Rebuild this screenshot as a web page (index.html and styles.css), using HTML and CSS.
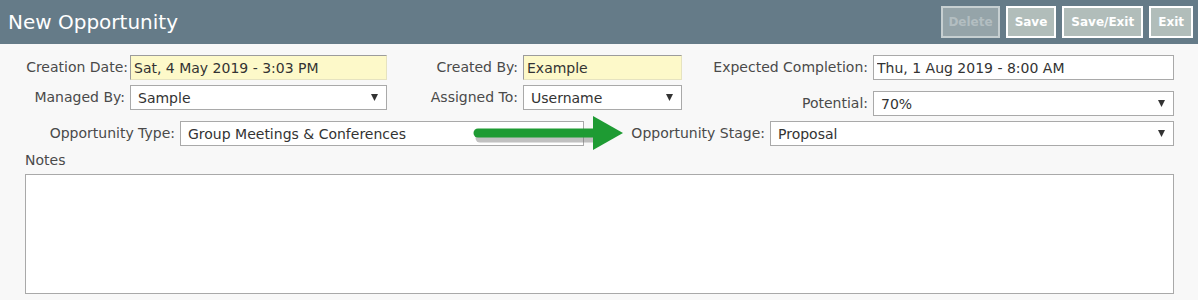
FILE: index.html
```html
<!DOCTYPE html>
<html lang="en">
<head>
    <meta charset="UTF-8">
    <title>New Opportunity</title>
    <link rel="stylesheet" href="styles.css">
</head>
<body>
    <div class="header">
        <h1>New Opportunity</h1>
        <div class="actions">
            <button class="btn" disabled>Delete</button>
            <button class="btn">Save</button>
            <button class="btn">Save/Exit</button>
            <button class="btn">Exit</button>
        </div>
    </div>
    <form class="form">
        <div class="row row-three">
            <label>Creation Date:</label>
            <input type="text" class="readonly" value="Sat, 4 May 2019 - 3:03 PM" readonly>
            <label>Created By:</label>
            <input type="text" class="readonly" value="Example" readonly>
            <label>Expected Completion:</label>
            <input type="text" value="Thu, 1 Aug 2019 - 8:00 AM">
        </div>
        <div class="row row-three">
            <label>Managed By:</label>
            <select><option>Sample</option></select>
            <label>Assigned To:</label>
            <select><option>Username</option></select>
            <label class="lower">Potential:</label>
            <select class="lower"><option>70%</option></select>
        </div>
        <div class="row row-two">
            <label>Opportunity Type:</label>
            <select><option>Group Meetings &amp; Conferences</option></select>
            <label>Opportunity Stage:</label>
            <select><option>Proposal</option></select>
        </div>
        <div class="notes">
            <label>Notes</label>
            <textarea></textarea>
        </div>
        <svg class="arrow" width="170" height="50" viewBox="0 0 170 50">
            <g transform="translate(1 4)" stroke="#777" opacity="0.45">
                <line x1="13" y1="22" x2="128" y2="22" stroke-width="9" stroke-linecap="round"/>
            </g>
            <g fill="#1e9b33" stroke="#1e9b33">
                <line x1="12" y1="21" x2="128" y2="21" stroke-width="9" stroke-linecap="round"/>
                <polygon points="127,4 157,21 127,38" stroke="none"/>
            </g>
        </svg>
    </form>
</body>
</html>
```

FILE: styles.css
```css
body {
    margin: 0;
    background: #f8f8f8;
    font-family: "DejaVu Sans", Verdana, sans-serif;
    font-size: 14px;
    color: #4a4a4a;
}
.header {
    height: 44px;
    background: #657b88;
    display: flex;
    align-items: center;
    justify-content: space-between;
    padding: 0 5px 0 8px;
}
.header h1 {
    margin: 0;
    font-size: 20px;
    font-weight: normal;
    color: #fff;
}
.actions {
    display: flex;
    gap: 6px;
}
.btn {
    height: 32px;
    padding: 0 7px;
    border: 2px solid #fff;
    background: #b1bdba;
    color: #fff;
    font-family: inherit;
    font-size: 12px;
    font-weight: bold;
}
.btn:disabled {
    padding: 0 5px;
    background: #95a4a9;
    border-color: #c6cfd1;
    color: #b3bec1;
}
.form {
    position: relative;
    padding: 11px 24px 0 25px;
}
.row {
    display: grid;
    align-items: start;
    margin-bottom: 5px;
}
.row-three {
    grid-template-columns: 105px 257px 136px 159px 191px 301px;
}
.row-two {
    grid-template-columns: 155px 404px 186px 404px;
}
.row label {
    text-align: right;
    padding-right: 5px;
    line-height: 25px;
    white-space: nowrap;
}
.row-three:first-child label:first-child {
    padding-right: 2px;
}
input, select, textarea {
    box-sizing: border-box;
    font-family: inherit;
    font-size: 14px;
    color: #333;
    margin: 0;
}
input {
    height: 25px;
    padding: 0 3px;
    border: 1px solid #a9a9a9;
    background: #fff;
}
input.readonly {
    background: #fdf9c9;
    border: 1px solid #e6e3c0;
    border-top-color: #9c9c9c;
    border-left-color: #9c9c9c;
}
select {
    height: 25px;
    padding: 0 7px;
    border: 1px solid #a9a9a9;
    background: #fff url("data:image/svg+xml,%3Csvg xmlns='http://www.w3.org/2000/svg' width='7' height='7'%3E%3Cpath d='M0 0h7L3.5 7z' fill='%23333'/%3E%3C/svg%3E") no-repeat right 8px center;
    appearance: none;
    border-radius: 0;
}
.lower {
    margin-top: 6px;
}
.notes label {
    display: block;
    line-height: 18px;
    margin-top: 2px;
}
.notes textarea {
    display: block;
    width: 1149px;
    height: 120px;
    margin-top: 5px;
    border: 1px solid #a9a9a9;
    background: #fff;
    resize: none;
}
.arrow {
    position: absolute;
    left: 466px;
    top: 68px;
}
```
